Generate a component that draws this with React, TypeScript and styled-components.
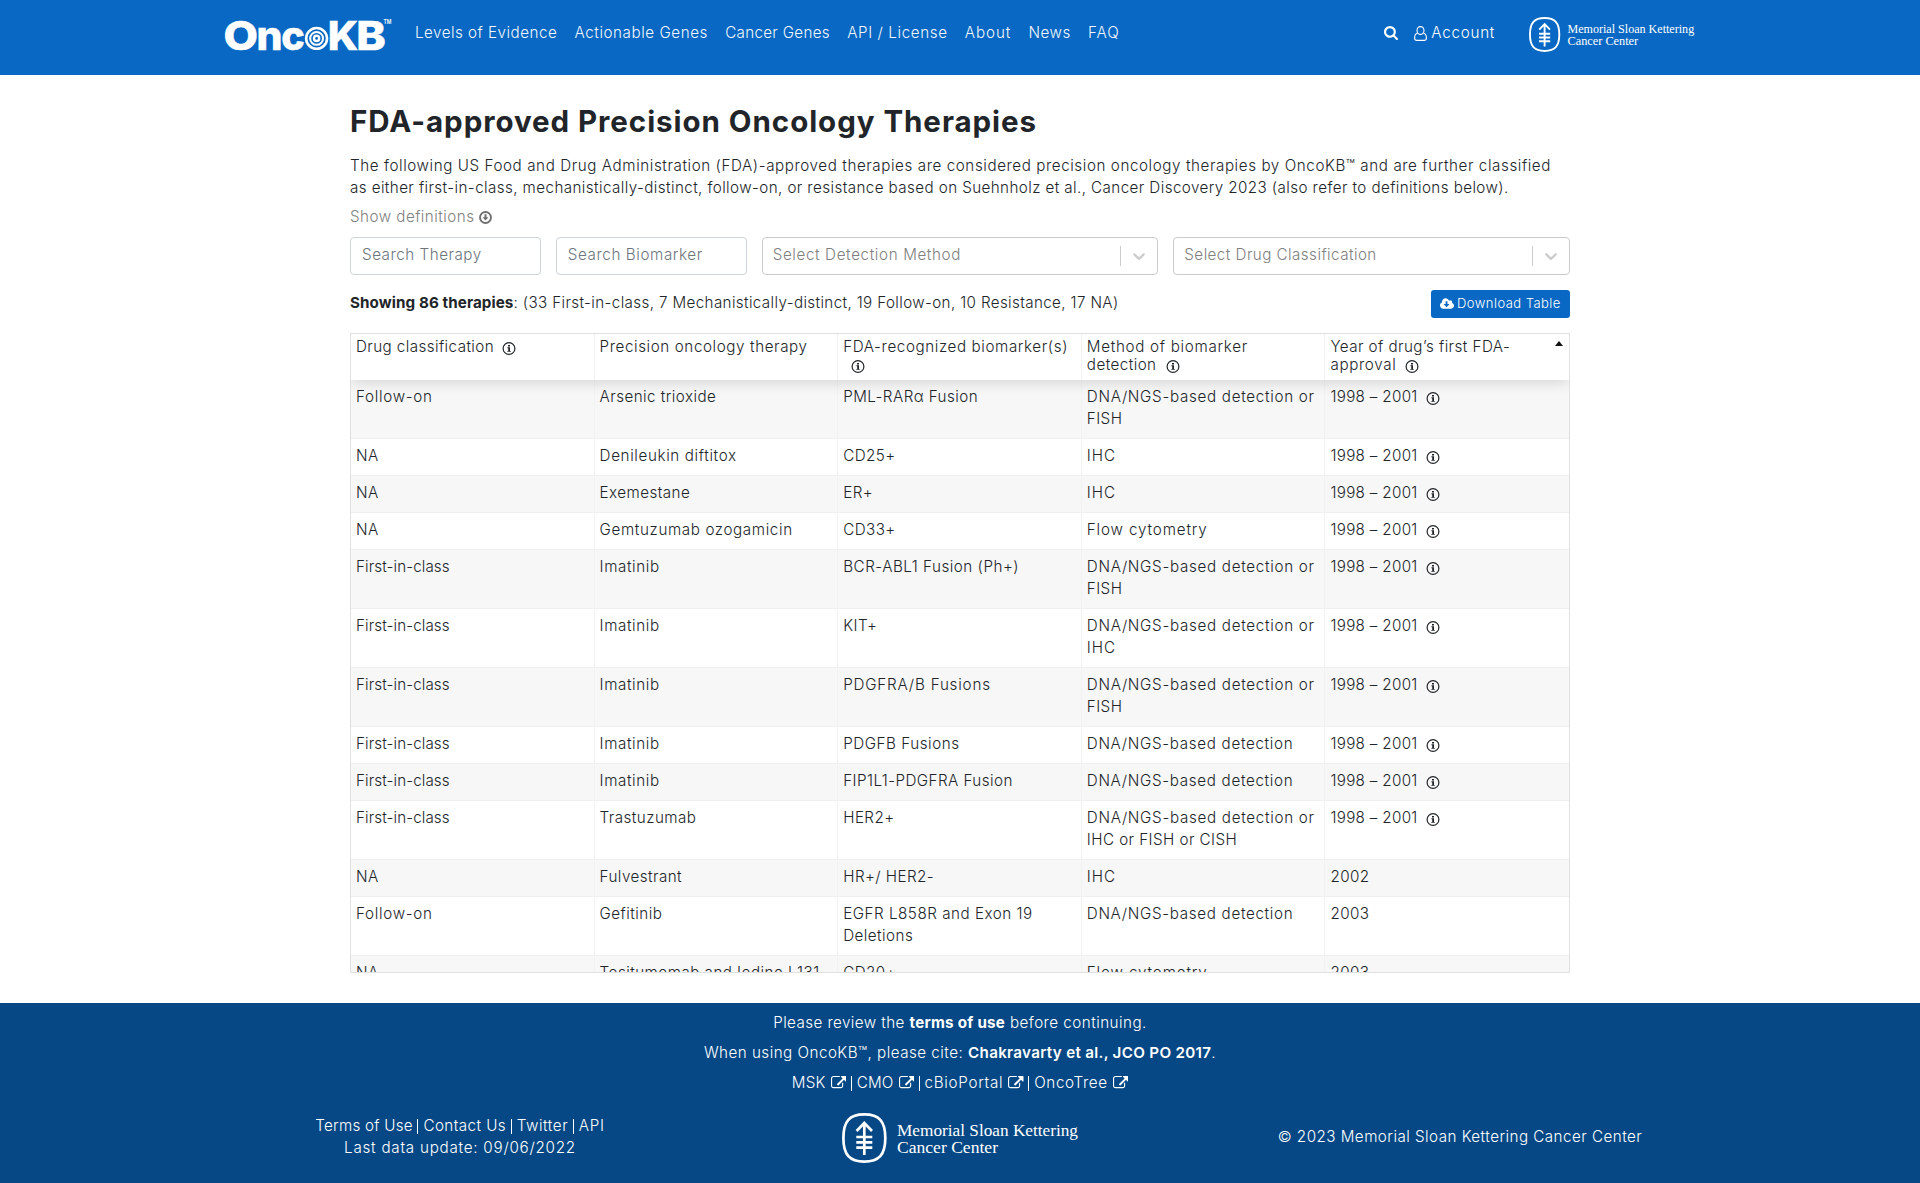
import React from "react";
import styled, { createGlobalStyle } from "styled-components";

const GlobalStyle = createGlobalStyle`
  *, *::before, *::after { box-sizing: border-box; }
  body {
    margin: 0;
    background: #fff;
    color: #212529;
    font-family: Inter, "Open Sans", sans-serif;
    font-size: 15.2px;
    font-weight: 365;
    line-height: 22px;
    letter-spacing: 0.45px;
    overflow: hidden;
  }
  p, h1 { margin: 0; }
`;

const Page = styled.div`
  display: flex;
  flex-direction: column;
  height: 1183px;
`;

const Tracked = styled.span<{ $ls?: number }>`
  letter-spacing: ${(p) => (p.$ls === undefined ? "inherit" : `${p.$ls}px`)};
  white-space: pre;
`;

/* ---------- header ---------- */
const Header = styled.header`
  display: flex;
  justify-content: center;
  height: 75px;
  background: #0968c3;
  color: #fff;
`;
const HeaderInner = styled.div`
  display: flex;
  align-items: flex-start;
  width: 1470px;
`;
const Brand = styled.a`
  display: flex;
  width: 195px;
  margin-left: -5px;
`;
const Nav = styled.nav`
  display: flex;
  flex: 1;
  gap: 17.3px;
  padding-top: 22px;
  opacity: 0.95;
`;
const Tools = styled.div`
  display: flex;
  align-items: center;
  padding-top: 22px;
`;
const Account = styled.a`
  display: flex;
  align-items: center;
  gap: 4px;
  margin: 0 34px 0 16px;
`;
const HeaderLogo = styled.div`
  padding-top: 17px;
  height: 52px;
`;

/* ---------- content ---------- */
const Main = styled.main`
  width: 1220px;
  height: 928px;
  margin: 0 auto;
  padding-top: 29px;
`;
const Title = styled.h1`
  font-size: 29.5px;
  font-weight: 700;
  line-height: 34px;
  letter-spacing: 0.95px;
  white-space: nowrap;
`;
const Intro = styled.p`
  margin-top: 17px;
`;
const IntroLine = styled.span`
  display: block;
`;
const Toggle = styled.div`
  display: flex;
  align-items: center;
  gap: 4px;
  margin-top: 7px;
  color: #808080;
`;
const Filters = styled.div`
  display: grid;
  grid-template-columns: 2fr 2fr 4.157fr 4.157fr;
  gap: 15px;
  margin-top: 9px;
`;
const Field = styled.div`
  display: flex;
  align-items: center;
  height: 38px;
  padding: 0 11px 2px;
  border: 1px solid #ced4da;
  border-radius: 4px;
  color: #6c757d;
`;
const SelectBox = styled(Field)`
  padding: 0 0 0 10px;
  border-color: #ccc;
  color: #808080;
`;
const SelectLabel = styled.span`
  flex: 1;
  padding-bottom: 2px;
`;
const SelectArrow = styled.span`
  display: flex;
  align-items: center;
  justify-content: center;
  width: 37px;
  height: 20px;
  border-left: 1px solid #ccc;
`;
const Summary = styled.div`
  display: flex;
  justify-content: space-between;
  align-items: flex-start;
  height: 28px;
  margin-top: 15px;
`;
const SummaryText = styled.p`
  padding-top: 2px;
`;
const Strong = styled.b<{ $weight?: number; $ls?: number }>`
  font-weight: ${(p) => p.$weight ?? 700};
  letter-spacing: ${(p) => p.$ls ?? 0}px;
`;
const DownloadButton = styled.button`
  display: flex;
  align-items: center;
  gap: 3px;
  width: 139px;
  height: 28px;
  padding: 0 0 2px 9px;
  border: 0;
  border-radius: 3px;
  background: #0968c3;
  color: #fff;
  font: 365 13px/20px Inter, sans-serif;
  letter-spacing: 0.46px;
  white-space: nowrap;
`;

/* ---------- table ---------- */
const Table = styled.div`
  display: flex;
  flex-direction: column;
  height: 640px;
  margin-top: 15px;
  border: 1px solid #e0e0e0;
  overflow: hidden;
`;
const HeadRow = styled.div`
  display: grid;
  grid-template-columns: repeat(5, 1fr);
  flex: none;
  height: 46px;
  line-height: 18px;
  background: #fff;
  box-shadow: 0 2px 15px 0 rgba(0, 0, 0, 0.15);
  z-index: 1;
`;
const HeadCell = styled.div`
  display: flex;
  justify-content: space-between;
  padding: 4px 6px 4px 5px;
  border-right: 1px solid #f2f2f2;
  &:last-child { border-right: 0; }
`;
const Row = styled.div<{ $odd: boolean }>`
  display: grid;
  grid-template-columns: repeat(5, 1fr);
  flex: none;
  background: ${(p) => (p.$odd ? "#f7f7f7" : "#fff")};
  border-bottom: 1px solid #f0f0f0;
`;
const Cell = styled.div`
  padding: 6px 0 8px 5px;
  border-right: 1px solid #f2f2f2;
  &:last-child { border-right: 0; }
`;
const InfoWrap = styled.span<{ $gap?: number }>`
  display: inline-block;
  height: 13px;
  margin-left: ${(p) => p.$gap ?? 8}px;
  vertical-align: -3px;
  line-height: 0;
`;
const SortMark = styled.span`
  width: 0;
  height: 0;
  margin-top: 3px;
  border: 4.5px solid transparent;
  border-top-width: 0;
  border-bottom: 5px solid #111;
`;

/* ---------- footer ---------- */
const Footer = styled.footer`
  flex: 1;
  padding-top: 9px;
  background: #064885;
  color: #fff;
  text-align: center;
`;
const FooterLine = styled.p`
  height: 22px;
  margin-bottom: 8px;
`;
const FooterColumns = styled.div`
  display: grid;
  grid-template-columns: repeat(3, 500px);
  justify-content: center;
  align-items: center;
  height: 50px;
  margin-top: 19px;
`;
const FooterText = styled.div`
  padding-bottom: 2px;
`;
const FooterLogo = styled.div`
  display: flex;
  justify-content: center;
`;
const LinkRow = styled.div`
  display: flex;
  justify-content: center;
  height: 22px;
  white-space: nowrap;
`;
const FooterLink = styled.a`
  display: flex;
  align-items: center;
  gap: 5px;
  & + & {
    margin-left: 4.5px;
  }
  & + &::before {
    content: "";
    width: 1px;
    height: 15px;
    background: #fff;
  }
`;

/* ---------- drawings ---------- */
const OncoKbLogo = () => (
  <svg width="180" height="70" viewBox="220 0 180 70" fill="#fff">
    <g fontFamily="Inter, sans-serif" fontWeight="760" fontSize="39.4" stroke="#fff" strokeWidth="0.5" letterSpacing="0">
      <text x="223.5" y="49.5" textLength="34.5" lengthAdjust="spacingAndGlyphs">O</text>
      <text x="256.6" y="49.5" textLength="26" lengthAdjust="spacingAndGlyphs">n</text>
      <text x="281.3" y="49.5" textLength="23.5" lengthAdjust="spacingAndGlyphs">c</text>
      <text x="327.8" y="49.5" textLength="30.5" lengthAdjust="spacingAndGlyphs">K</text>
      <text x="356.2" y="49.5" textLength="29.5" lengthAdjust="spacingAndGlyphs">B</text>
    </g>
    <circle cx="316.6" cy="38.4" r="11.7" />
    <g fill="none" stroke="#0968c3">
      <circle cx="316.6" cy="38.4" r="8.3" strokeWidth="1.7" />
      <circle cx="316.6" cy="38.4" r="4.6" strokeWidth="1.6" />
    </g>
    <circle cx="316.6" cy="38.4" r="1.4" fill="#0968c3" />
    <text x="383.4" y="24.3" fontFamily="Inter, sans-serif" fontWeight="600" fontSize="5.6" letterSpacing="0" textLength="8" lengthAdjust="spacingAndGlyphs">TM</text>
  </svg>
);

const MskLogo = ({ scale }: { scale: number }) => (
  <svg width={237 * scale} height={50 * scale} viewBox="0 0 237 50" fill="#fff">
    <g fill="none" stroke="#fff" strokeWidth="2.7">
      <path d="M22.3 1.4C37 1.4 43.3 8 43.3 25S37 48.6 22.3 48.6 1.4 42 1.4 25 7.6 1.4 22.3 1.4Z" />
      <path d="M22.3 10V42M14.6 18L22.3 10L30 18M14.3 24H30.3M14.3 29.3H30.3M14.3 34.6H30.3" />
    </g>
    <g fontFamily='"Liberation Serif", serif' fontWeight="400" fontSize="16.8" letterSpacing="0">
      <text x="55" y="23.3" textLength="181" lengthAdjust="spacingAndGlyphs">Memorial Sloan Kettering</text>
      <text x="55" y="39.8" textLength="101" lengthAdjust="spacingAndGlyphs">Cancer Center</text>
    </g>
  </svg>
);

const SearchIcon = () => (
  <svg width="14" height="14" viewBox="64 128 1664 1664" fill="#fff">
    <path d="M1216 832q0-185-131.5-316.5t-316.5-131.5-316.5 131.5-131.5 316.5 131.5 316.5 316.5 131.5 316.5-131.5 131.5-316.5zm512 832q0 52-38 90t-90 38q-54 0-90-38l-343-342q-179 124-399 124-143 0-273.5-55.5t-225-150-150-225-55.5-273.5 55.5-273.5 150-225 225-150 273.5-55.5 273.5 55.5 225 150 150 225 55.5 273.5q0 220-124 399l343 343q37 37 37 90z" />
  </svg>
);

const UserIcon = () => (
  <svg width="13" height="15" viewBox="0 0 13 15" fill="none" stroke="#fff" strokeWidth="1.1">
    <ellipse cx="6.5" cy="4.5" rx="3.5" ry="3.9" />
    <path d="M3.4 7.2C1.5 7.6.6 9.6.6 11.9.6 13.4 1.5 14.4 2.9 14.4H10.1C11.5 14.4 12.4 13.4 12.4 11.9 12.4 9.6 11.5 7.6 9.6 7.2" />
  </svg>
);

const CircleDownIcon = () => (
  <svg width="13" height="13" viewBox="0 0 13 13">
    <circle cx="6.5" cy="6.5" r="5.5" fill="none" stroke="#707070" strokeWidth="1.9" />
    <path d="M5.5 3.2H7.5V6.3H9.5L6.5 9.5L3.5 6.3H5.5Z" fill="#707070" />
  </svg>
);

const CloudIcon = () => (
  <svg width="14" height="11" viewBox="-64 128 1920 1408" fill="#fff">
    <path d="M1216 928q0-14-9-23t-23-9h-224v-352q0-13-9.5-22.5t-22.5-9.5h-192q-13 0-22.5 9.5t-9.5 22.5v352h-224q-13 0-22.5 9.5t-9.5 22.5q0 14 9 23l352 352q9 9 23 9t23-9l351-351q10-12 10-24zm640 224q0 159-112.5 271.5t-271.5 112.5h-1088q-185 0-316.5-131.5t-131.5-316.5q0-130 70-240t188-165q-2-30-2-43 0-212 150-362t362-150q156 0 285.5 87t188.5 231q71-62 166-62 106 0 181 75t75 181q0 76-41 138 130 31 213.5 135.5t83.5 238.5z" />
  </svg>
);

const ExternalIcon = () => (
  <svg width="15.5" height="13.3" viewBox="0 0 1792 1536" fill="#fff">
    <path d="M1408 800v320q0 119-84.5 203.5t-203.5 84.5h-832q-119 0-203.5-84.5t-84.5-203.5v-832q0-119 84.5-203.5t203.5-84.5h704q14 0 23 9t9 23v64q0 14-9 23t-23 9h-704q-66 0-113 47t-47 113v832q0 66 47 113t113 47h832q66 0 113-47t47-113v-320q0-14 9-23t23-9h64q14 0 23 9t9 23zm384-736v512q0 26-19 45t-45 19-45-19l-176-176-652 652q-10 10-23 10t-23-10l-114-114q-10-10-10-23t10-23l652-652-176-176q-19-19-19-45t19-45 45-19h512q26 0 45 19t19 45z" />
  </svg>
);

const Chevron = () => (
  <svg width="20" height="20" viewBox="0 0 20 20" fill="#ccc">
    <path d="M4.516 7.548c0.436-0.446 1.043-0.481 1.576 0l3.908 3.747 3.908-3.747c0.533-0.481 1.141-0.446 1.574 0 0.436 0.445 0.408 1.197 0 1.615-0.406 0.418-4.695 4.502-4.695 4.502-0.217 0.223-0.502 0.335-0.787 0.335s-0.570-0.112-0.789-0.335c0 0-4.287-4.084-4.695-4.502s-0.436-1.170 0-1.615z" />
  </svg>
);

const Info = ({ gap }: { gap?: number }) => (
  <InfoWrap $gap={gap}>
    <svg width="14" height="13" viewBox="0 0 14 13">
      <circle cx="7" cy="6.5" r="5.9" fill="none" stroke="#212529" strokeWidth="1.2" />
      <path d="M6 3H8V4.5H6ZM5.4 5.3H8V8.9H8.8V9.8H5.3V8.9H6.2V6.2H5.4Z" fill="#212529" />
    </svg>
  </InfoWrap>
);

/* ---------- data ---------- */
type Item = [string, number?];
const navItems: Item[] = [
  ["Levels of Evidence", 0.49],
  ["Actionable Genes", 0.56],
  ["Cancer Genes", 0.3],
  ["API / License", 0.6],
  ["About", 0.9],
  ["News", 0.5],
  ["FAQ", 0.95],
];
const projectLinks: Item[] = [["MSK", 0.3], ["CMO", 0.2], ["cBioPortal", 0.7], ["OncoTree", 0.65]];
const siteLinks: Item[] = [["Terms of Use", 0.25], ["Contact Us", 0.45], ["Twitter", 0.6], ["API", 0.7]];

/* letter spacing of table words that run wider or narrower than the body text */
const tracking: Record<string, number> = {
  "DNA/NGS-based detection or": 0.7,
  "DNA/NGS-based detection": 0.68,
  "Follow-on": 0.7,
  "First-in-class": 0.1,
  "Denileukin diftitox": 0.63,
  "Gemtuzumab ozogamicin": 0.62,
  "BCR-ABL1 Fusion (Ph+)": 0.52,
  "PDGFRA/B Fusions": 0.8,
  "PDGFB Fusions": 0.54,
  "EGFR L858R and Exon 19": 0.52,
  "Flow cytometry": 0.86,
  "1998 – 2001": 0.32,
  IHC: 0.95,
  Imatinib: 0.6,
};

const early = "1998 – 2001";
const rows: string[][] = [
  ["Follow-on", "Arsenic trioxide", "PML-RARα Fusion", "DNA/NGS-based detection or\nFISH", early],
  ["NA", "Denileukin diftitox", "CD25+", "IHC", early],
  ["NA", "Exemestane", "ER+", "IHC", early],
  ["NA", "Gemtuzumab ozogamicin", "CD33+", "Flow cytometry", early],
  ["First-in-class", "Imatinib", "BCR-ABL1 Fusion (Ph+)", "DNA/NGS-based detection or\nFISH", early],
  ["First-in-class", "Imatinib", "KIT+", "DNA/NGS-based detection or\nIHC", early],
  ["First-in-class", "Imatinib", "PDGFRA/B Fusions", "DNA/NGS-based detection or\nFISH", early],
  ["First-in-class", "Imatinib", "PDGFB Fusions", "DNA/NGS-based detection", early],
  ["First-in-class", "Imatinib", "FIP1L1-PDGFRA Fusion", "DNA/NGS-based detection", early],
  ["First-in-class", "Trastuzumab", "HER2+", "DNA/NGS-based detection or\nIHC or FISH or CISH", early],
  ["NA", "Fulvestrant", "HR+/ HER2-", "IHC", "2002"],
  ["Follow-on", "Gefitinib", "EGFR L858R and Exon 19\nDeletions", "DNA/NGS-based detection", "2003"],
  ["NA", "Tositumomab and Iodine I 131", "CD20+", "Flow cytometry", "2003"],
];

export default function App() {
  return (
    <Page>
      <GlobalStyle />
      <Header>
        <HeaderInner>
          <Brand><OncoKbLogo /></Brand>
          <Nav>
            {navItems.map(([label, ls]) => <Tracked key={label} $ls={ls}>{label}</Tracked>)}
          </Nav>
          <Tools>
            <SearchIcon />
            <Account><UserIcon /><Tracked $ls={0.75}>Account</Tracked></Account>
          </Tools>
          <HeaderLogo><MskLogo scale={0.7} /></HeaderLogo>
        </HeaderInner>
      </Header>

      <Main>
        <Title>FDA-approved Precision Oncology Therapies</Title>
        <Intro>
          <IntroLine><Tracked $ls={0.58}>The following US Food and Drug Administration (FDA)-approved therapies are considered precision oncology therapies by OncoKB™ and are further classified</Tracked></IntroLine>
          <IntroLine><Tracked $ls={0.41}>as either first-in-class, mechanistically-distinct, follow-on, or resistance based on Suehnholz et al., Cancer Discovery 2023 (also refer to definitions below).</Tracked></IntroLine>
        </Intro>
        <Toggle><Tracked $ls={0.47}>Show definitions</Tracked><CircleDownIcon /></Toggle>
        <Filters>
          <Field><Tracked $ls={0.53}>Search Therapy</Tracked></Field>
          <Field><Tracked $ls={0.6}>Search Biomarker</Tracked></Field>
          <SelectBox><SelectLabel><Tracked $ls={0.63}>Select Detection Method</Tracked></SelectLabel><SelectArrow><Chevron /></SelectArrow></SelectBox>
          <SelectBox><SelectLabel><Tracked $ls={0.45}>Select Drug Classification</Tracked></SelectLabel><SelectArrow><Chevron /></SelectArrow></SelectBox>
        </Filters>
        <Summary>
          <SummaryText>
            <Strong $ls={0.09}>Showing 86 therapies</Strong>
            <Tracked $ls={0.37}>: (33 First-in-class, 7 Mechanistically-distinct, 19 Follow-on, 10 Resistance, 17 NA)</Tracked>
          </SummaryText>
          <DownloadButton><CloudIcon />Download Table</DownloadButton>
        </Summary>
        <Table>
          <HeadRow>
            <HeadCell><span><Tracked $ls={0.42}>Drug classification</Tracked><Info /></span></HeadCell>
            <HeadCell><Tracked $ls={0.6}>Precision oncology therapy</Tracked></HeadCell>
            <HeadCell><span><Tracked $ls={0.6}>FDA-recognized biomarker(s)</Tracked><br /><Info /></span></HeadCell>
            <HeadCell><span><Tracked $ls={0.7}>Method of biomarker</Tracked><br />detection<Info gap={9} /></span></HeadCell>
            <HeadCell><span>Year of drug’s first FDA-<br /><Tracked $ls={0.65}>approval</Tracked><Info gap={9} /></span><SortMark /></HeadCell>
          </HeadRow>
          {rows.map((row, r) => (
            <Row key={r} $odd={r % 2 === 0}>
              {row.map((text, c) => (
                <Cell key={c}>
                  {text.split("\n").map((line, i) => (
                    <React.Fragment key={line}>
                      {i > 0 && <br />}
                      <Tracked $ls={tracking[line]}>{line}</Tracked>
                    </React.Fragment>
                  ))}
                  {text === early && <Info />}
                </Cell>
              ))}
            </Row>
          ))}
        </Table>
      </Main>

      <Footer>
        <FooterLine>
          <Tracked $ls={0.42}>Please review the </Tracked>
          <Strong $ls={0.25}>terms of use</Strong>
          <Tracked $ls={0.47}> before continuing.</Tracked>
        </FooterLine>
        <FooterLine>
          <Tracked $ls={0.48}>When using OncoKB™, please cite: </Tracked>
          <Strong $weight={600} $ls={0.3}>Chakravarty et al., JCO PO 2017</Strong>.
        </FooterLine>
        <LinkRow>
          {projectLinks.map(([name, ls]) => (
            <FooterLink key={name}><Tracked $ls={ls}>{name}</Tracked><ExternalIcon /></FooterLink>
          ))}
        </LinkRow>
        <FooterColumns>
          <FooterText>
            <LinkRow>
              {siteLinks.map(([name, ls]) => (
                <FooterLink key={name}><Tracked $ls={ls}>{name}</Tracked></FooterLink>
              ))}
            </LinkRow>
            <Tracked $ls={0.76}>Last data update: 09/06/2022</Tracked>
          </FooterText>
          <FooterLogo><MskLogo scale={1} /></FooterLogo>
          <FooterText><Tracked $ls={0.47}>© 2023 Memorial Sloan Kettering Cancer Center</Tracked></FooterText>
        </FooterColumns>
      </Footer>
    </Page>
  );
}
